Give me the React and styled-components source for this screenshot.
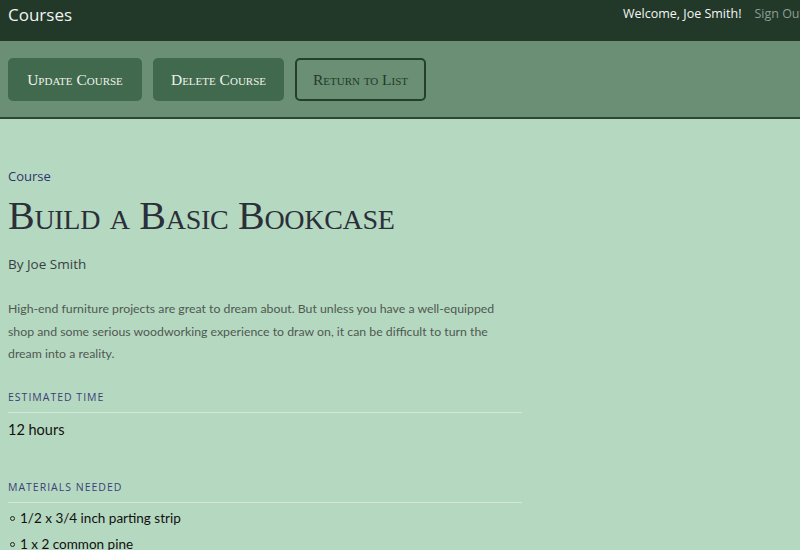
import React from 'react'
import styled, { createGlobalStyle } from 'styled-components';

const Global = createGlobalStyle`
    html, body {
        margin: 0;
        padding: 0;
        background: #b5d8c0;
        overflow: hidden;
    }
    body {
        font-family: "Open Sans", "Liberation Sans", sans-serif;
    }
`;

const Header = styled.div`
    display: flex;
    justify-content: space-between;
    align-items: flex-start;
    height: 41px;
    background: #223829;
    padding: 0 0 0 8px;
    white-space: nowrap;
    overflow: hidden;

    h1 {
        margin: 3px 0 0;
        font-size: 17px;
        font-weight: 400;
        color: #f2f4f2;
    }
`;

const Nav = styled.nav`
    display: flex;
    gap: 13px;
    margin-top: 5px;
    font-size: 12.5px;
    margin-right: -4px;

    span { color: #f4f6f4; }
    a { color: #8e9e93; text-decoration: none; }
`;

const Actions = styled.div`
    display: flex;
    gap: 11px;
    padding: 17px 8px 16px;
    background: #6b8f75;
    border-bottom: 2px solid #2b4733;
`;

const Button = styled.button`
    width: ${p => p.w}px;
    height: 43px;
    border-radius: 5px;
    border: 2px solid ${p => p.outline ? '#23402b' : '#41694d'};
    background: ${p => p.outline ? 'transparent' : '#41694d'};
    color: ${p => p.outline ? '#1f3b27' : '#eef3ec'};
    font-family: "Liberation Serif", serif;
    font-variant: small-caps;
    font-size: 15.5px;
    padding: 0;
`;

const Main = styled.div`
    width: 514px;
    padding: 48px 8px 0;
    color: #333;
`;

const Label = styled.h3`
    margin: 0;
    font-size: 13px;
    font-weight: 400;
    color: #2e3470;
`;

const Title = styled.h2`
    margin: 6px 0 0;
    font-family: "Liberation Serif", serif;
    font-variant: small-caps;
    font-weight: 400;
    font-size: 40px;
    line-height: 50px;
    color: #2b2f3a;
    letter-spacing: -0.3px;
`;

const Author = styled.p`
    margin: 14px 0 0;
    font-size: 13.5px;
    color: #3a3f44;
`;

const Desc = styled.p`
    margin: 25px 0 0;
    font-family: Lato, sans-serif;
    font-size: 12.3px;
    line-height: 22.5px;
    color: #505852;
`;

const Section = styled.div`
    margin-top: ${p => p.top}px;

    h4 {
        margin: 0;
        padding-bottom: 8px;
        border-bottom: 1px solid #d4e9da;
        font-size: 10.5px;
        font-weight: 400;
        letter-spacing: 1px;
        text-transform: uppercase;
        color: #3b3f7a;
    }
`;

const Value = styled.p`
    margin: 8px 0 0;
    font-family: Lato, sans-serif;
    font-size: 14.5px;
    color: #111;
`;

const List = styled.ul`
    margin: 2px 0 0;
    padding: 0;
    list-style: none;
    font-family: Lato, sans-serif;
    font-size: 13.5px;
    color: #111;

    li {
        position: relative;
        padding-left: 12px;
        line-height: 26px;
    }

    li::before {
        content: "";
        position: absolute;
        left: 2px;
        top: 11px;
        width: 3px;
        height: 3px;
        border: 1px solid #222;
        border-radius: 50%;
    }
`;

export default function App() {
    return (
        <>
            <Global />
            <Header>
                <h1>Courses</h1>
                <Nav>
                    <span>Welcome, Joe Smith!</span>
                    <a href="#">Sign Out</a>
                </Nav>
            </Header>
            <Actions>
                <Button w={134}>Update Course</Button>
                <Button w={131}>Delete Course</Button>
                <Button w={131} outline>Return to List</Button>
            </Actions>
            <Main>
                <Label>Course</Label>
                <Title>Build a Basic Bookcase</Title>
                <Author>By Joe Smith</Author>
                <Desc>
                    High-end furniture projects are great to dream about. But unless you have a well-equipped
                    shop and some serious woodworking experience to draw on, it can be difficult to turn the
                    dream into a reality.
                </Desc>
                <Section top={24}>
                    <h4>Estimated Time</h4>
                    <Value>12 hours</Value>
                </Section>
                <Section top={42}>
                    <h4>Materials Needed</h4>
                    <List>
                        <li>1/2 x 3/4 inch parting strip</li>
                        <li>1 x 2 common pine</li>
                        <li>1 x 4 common pine</li>
                    </List>
                </Section>
            </Main>
        </>
    )
}
